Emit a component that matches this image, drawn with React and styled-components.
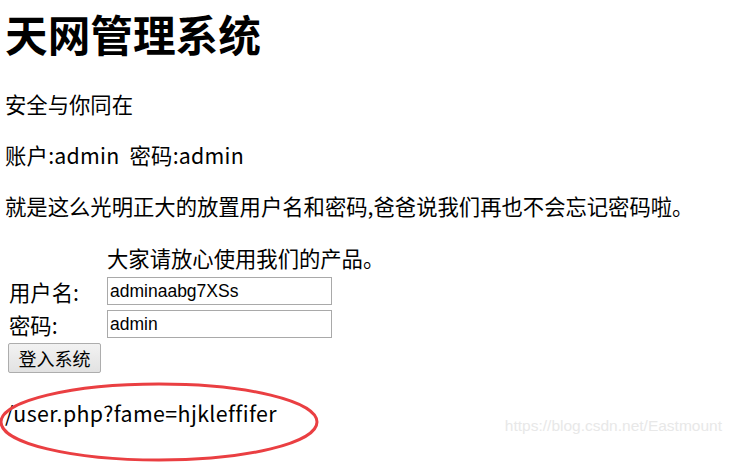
import React from 'react'
import styled, { createGlobalStyle } from 'styled-components'

const GlobalStyle = createGlobalStyle`
    html, body {
        margin: 0;
        padding: 0;
        background: #fff;
    }
    body {
        font-family: "Noto Sans CJK SC", "Noto Sans", sans-serif;
        color: #000;
    }
`

const Page = styled.div`
    position: relative;
    width: 732px;
    height: 470px;
    overflow: hidden;
    padding-left: 5px;
    box-sizing: border-box;
`

const Title = styled.h1`
    margin: 0;
    padding-top: 8px;
    font-size: 42.67px;
    line-height: 52px;
    font-weight: bold;
`

const Para = styled.p`
    margin: ${props => props.first ? '29px' : '0'} 0 22px;
    font-size: 21.33px;
    line-height: 29px;
    white-space: pre;
    letter-spacing: ${props => props.wide ? '0.25px' : '0'};
`

const LoginForm = styled.form`
    margin-top: 23px;
    padding-left: 3px;
    display: grid;
    grid-template-columns: 94px 225px;
    grid-template-rows: 29px 28px 28px 30px;
    column-gap: 5px;
    row-gap: 5px;
    font-size: 21.33px;
`

const Cell = styled.div`
    grid-column: ${props => props.col};
    display: flex;
    align-items: center;
    line-height: 29px;
    white-space: nowrap;
    padding-left: ${props => props.indent ? '1px' : '0'};
`

const TextInput = styled.input`
    width: 225px;
    height: 28px;
    box-sizing: border-box;
    border: 1px solid #a9a9a9;
    padding: 0 2px;
    font-family: "Liberation Sans", Arial, sans-serif;
    font-size: 17.5px;
    color: #000;
    outline: none;
`

const SubmitButton = styled.button`
    grid-column: 1;
    width: 93px;
    height: 30px;
    box-sizing: border-box;
    border: 1px solid #adadad;
    border-radius: 2px;
    background: linear-gradient(#f2f2f2, #e2e2e2);
    font-family: "Noto Sans CJK SC", sans-serif;
    font-size: 18px;
    color: #000;
    padding: 0;
`

const Result = styled.div`
    margin-top: 25px;
    font-size: 21.33px;
    line-height: 29px;
    letter-spacing: 0.4px;
`

const Circle = styled.svg`
    position: absolute;
    left: -2px;
    top: 381px;
`

const Watermark = styled.div`
    position: absolute;
    right: 10px;
    top: 417px;
    font-family: "Liberation Sans", Arial, sans-serif;
    font-size: 15.5px;
    color: #e8e8e8;
`

const App = () => {
    return (
        <Page>
            <GlobalStyle />
            <Title>天网管理系统</Title>
            <Para first>安全与你同在</Para>
            <Para wide>账户:admin  密码:admin</Para>
            <Para>就是这么光明正大的放置用户名和密码,爸爸说我们再也不会忘记密码啦。</Para>
            <LoginForm onSubmit={e => e.preventDefault()}>
                <Cell col={2}>大家请放心使用我们的产品。</Cell>
                <Cell col={1} indent>用户名:</Cell>
                <Cell col={2}><TextInput defaultValue="adminaabg7XSs" /></Cell>
                <Cell col={1} indent>密码:</Cell>
                <Cell col={2}><TextInput defaultValue="admin" /></Cell>
                <SubmitButton type="submit">登入系统</SubmitButton>
            </LoginForm>
            <Result>/user.php?fame=hjkleffifer</Result>
            <Circle width="324" height="84" viewBox="0 0 324 84">
                <ellipse cx="161" cy="41" rx="158" ry="38" fill="none" stroke="#ea3f42" strokeWidth="3" />
            </Circle>
            <Watermark>https://blog.csdn.net/Eastmount</Watermark>
        </Page>
    )
}

export default App
